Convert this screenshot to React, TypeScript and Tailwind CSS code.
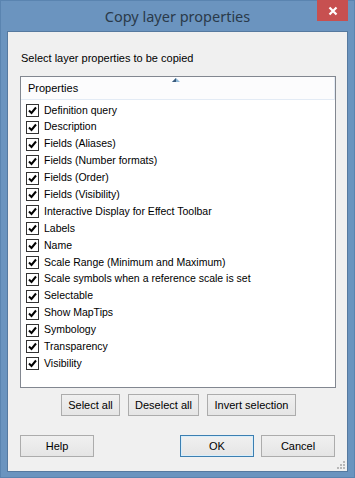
import React from "react";

const items = [
  "Definition query",
  "Description",
  "Fields (Aliases)",
  "Fields (Number formats)",
  "Fields (Order)",
  "Fields (Visibility)",
  "Interactive Display for Effect Toolbar",
  "Labels",
  "Name",
  "Scale Range (Minimum and Maximum)",
  "Scale symbols when a reference scale is set",
  "Selectable",
  "Show MapTips",
  "Symbology",
  "Transparency",
  "Visibility",
];

const font = { fontFamily: '"Liberation Sans", Arial, sans-serif' };

const Check = () => (
  <span className="w-[13px] h-[13px] border border-[#333] bg-white flex items-center justify-center shrink-0">
    <svg width="9" height="9" viewBox="0 0 9 9">
      <path d="M1 4.5 L3.5 7 L8 1.5" fill="none" stroke="#000" strokeWidth="2" />
    </svg>
  </span>
);

const Btn = ({ label, w, primary }: { label: string; w: string; primary?: boolean }) => (
  <button
    className={`${w} h-[22px] text-[11px] text-black bg-gradient-to-b from-[#f0f0f0] to-[#e5e5e5] border ${
      primary ? "border-[#3c7fb1] shadow-[inset_0_0_0_1px_#d8eefb]" : "border-[#acacac]"
    }`}
  >
    {label}
  </button>
);

export default function App() {
  return (
    <div className="w-[355px] h-[478px] bg-[#6b94bf] border border-[#5a84b0] flex flex-col" style={font}>
      {/* title bar */}
      <div className="h-[30px] flex relative">
        <div className="flex-1 text-center text-[14.5px] text-[#2a3a4a] pt-[5px]" style={{ fontFamily: '"Noto Sans", "Liberation Sans", sans-serif' }}>
          Copy layer properties
        </div>
        <div className="absolute right-[6px] top-[-1px] w-[31px] h-[21px] bg-[#c75050] flex items-center justify-center">
          <svg width="10" height="10" viewBox="0 0 10 10">
            <path d="M1.5 1.5 L8.5 8.5 M8.5 1.5 L1.5 8.5" stroke="#fff" strokeWidth="2.2" />
          </svg>
        </div>
      </div>
      {/* client */}
      <div className="ml-[6px] mr-[6px] h-[441px] border border-[#56799f] bg-[#f0f0f0] flex flex-col text-[11px] text-black">
        <div className="pl-[13px] pt-[18px] h-[44px]">Select layer properties to be copied</div>
        <div className="ml-[12px] w-[316px] h-[312px] border border-[#828790] bg-white flex flex-col">
          <div className="h-[23px] bg-[#fcfcfd] border-b border-r border-[#e3ebf5] relative flex items-center pl-[7px]">
            Properties
            <svg className="absolute left-[151px] top-[1px]" width="8" height="4" viewBox="0 0 8 4">
              <path d="M0 4 L4 0 L8 4 Z" fill="#8fb8d8" />
              <path d="M0 4 L4 0 L4 4 Z" fill="#3a5a7a" />
            </svg>
          </div>
          <div className="flex flex-col pt-[2px] text-[10.5px]">
            {items.map((t) => (
              <div key={t} className="h-[16.9px] flex items-center pl-[5px] gap-[5px]">
                <Check />
                <span>{t}</span>
              </div>
            ))}
          </div>
        </div>
        <div className="flex justify-center gap-[8px] mt-[6px] pl-[2px]">
          <Btn label="Select all" w="w-[59px]" />
          <Btn label="Deselect all" w="w-[71px]" />
          <Btn label="Invert selection" w="w-[89px]" />
        </div>
        <div className="flex mt-[19px] pl-[12px] pr-[12px]">
          <Btn label="Help" w="w-[74px]" />
          <div className="flex-1" />
          <div className="flex gap-[7px]">
            <Btn label="OK" w="w-[74px]" primary />
            <Btn label="Cancel" w="w-[74px]" />
          </div>
        </div>
        <div className="flex-1 flex items-end justify-end pr-[2px] pb-[2px]">
          <svg width="8" height="8" viewBox="0 0 8 8" fill="#b8b8b8">
            <rect x="6" y="0" width="2" height="2" />
            <rect x="3" y="3" width="2" height="2" />
            <rect x="6" y="3" width="2" height="2" />
            <rect x="0" y="6" width="2" height="2" />
            <rect x="3" y="6" width="2" height="2" />
            <rect x="6" y="6" width="2" height="2" />
          </svg>
        </div>
      </div>
    </div>
  );
}
